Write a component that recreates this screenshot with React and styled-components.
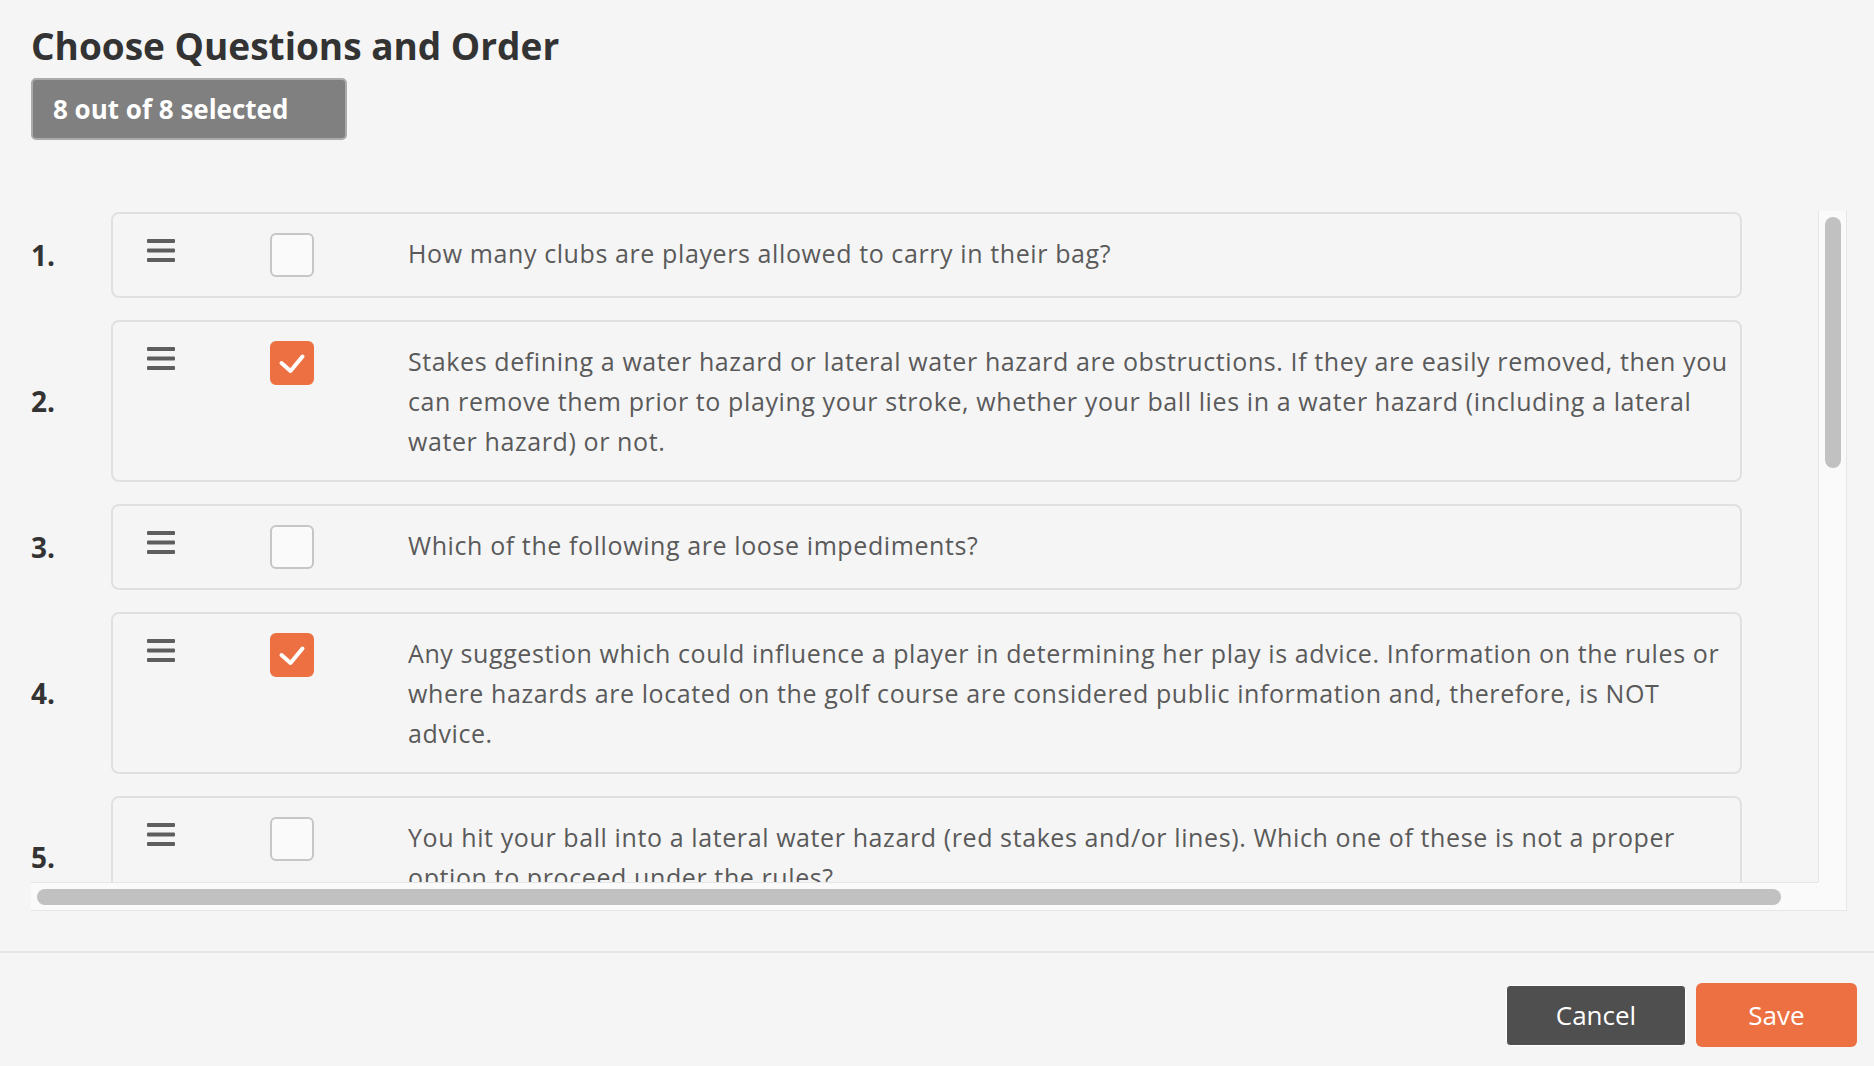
import React from 'react'
import styled, { createGlobalStyle } from 'styled-components'

const GlobalStyle = createGlobalStyle`
    html, body {
        margin: 0;
        padding: 0;
        background: #f5f5f5;
    }
    body {
        font-family: 'Open Sans', 'Liberation Sans', sans-serif;
    }
`

const questions = [
    { id: 1, checked: false, text: 'How many clubs are players allowed to carry in their bag?' },
    { id: 2, checked: true, text: 'Stakes defining a water hazard or lateral water hazard are obstructions. If they are easily removed, then you can remove them prior to playing your stroke, whether your ball lies in a water hazard (including a lateral water hazard) or not.' },
    { id: 3, checked: false, text: 'Which of the following are loose impediments?' },
    { id: 4, checked: true, text: 'Any suggestion which could influence a player in determining her play is advice. Information on the rules or where hazards are located on the golf course are considered public information and, therefore, is NOT advice.' },
    { id: 5, checked: false, text: 'You hit your ball into a lateral water hazard (red stakes and/or lines). Which one of these is not a proper option to proceed under the rules?' },
    { id: 6, checked: true, text: 'A player may ground his club in a bunker before making a stroke, as long as he does not improve his lie.' },
    { id: 7, checked: true, text: 'Your ball comes to rest on a cart path. Which of the following is true about taking relief from this immovable obstruction?' },
    { id: 8, checked: true, text: 'If a ball is lost outside a water hazard, the player must proceed under penalty of stroke and distance.' },
]

const Page = styled.div`
    height: 100vh;
    display: flex;
    flex-direction: column;
`
const Main = styled.div`
    flex: 1;
    display: flex;
    flex-direction: column;
    padding: 0 27px 0 31px;
`
const Title = styled.h1`
    margin: 24px 0 0;
    font-size: 37px;
    line-height: 44px;
    font-weight: 700;
    color: #333;
`
const Badge = styled.div`
    margin-top: 10px;
    width: 316px;
    height: 62px;
    box-sizing: border-box;
    display: flex;
    align-items: center;
    padding-left: 20px;
    border: 2px solid #ababab;
    border-radius: 5px;
    background: #808080;
    color: #fff;
    font-size: 26px;
    font-weight: 700;
`
const ScrollFrame = styled.div`
    margin-top: 71px;
    display: grid;
    grid-template-columns: 1787px 29px;
    grid-template-rows: 671px 29px;
`
const Viewport = styled.div`
    overflow: hidden;
`
const VTrack = styled.div`
    box-sizing: border-box;
    padding: 6px 0 0 6px;
    background: #fafafa;
    border-left: 1px solid #e6e6e6;
    border-right: 1px solid #e6e6e6;
`
const HTrack = styled.div`
    box-sizing: border-box;
    padding: 6px 0 0 6px;
    background: #fafafa;
    border-top: 1px solid #e6e6e6;
    border-bottom: 1px solid #e6e6e6;
`
const Corner = styled.div`
    background: #fafafa;
    border-right: 1px solid #e6e6e6;
    border-bottom: 1px solid #e6e6e6;
`
const Thumb = styled.div`
    width: ${p => p.$w}px;
    height: ${p => p.$h}px;
    border-radius: 8px;
    background: #c1c1c1;
`
const List = styled.div`
    width: 1818px;
    padding-top: 1px;
    display: flex;
    flex-direction: column;
    gap: 22px;
`
const Row = styled.div`
    display: flex;
    align-items: center;
`
const Number = styled.div`
    width: 80px;
    flex-shrink: 0;
    font-size: 28px;
    font-weight: 700;
    color: #333;
`
const Card = styled.div`
    width: 1631px;
    box-sizing: border-box;
    display: flex;
    align-items: flex-start;
    padding: 19px 12px 19px 34px;
    border: 2px solid #e0e0e0;
    border-radius: 8px;
    background: #f5f5f5;
`
const Handle = styled.div`
    width: 28px;
    height: 40px;
    margin: -2px 95px 0 0;
    display: flex;
    align-items: center;
    flex-shrink: 0;
`
const Checkbox = styled.div`
    width: 44px;
    height: 44px;
    box-sizing: border-box;
    flex-shrink: 0;
    margin-right: 94px;
    border-radius: 6px;
    border: 2px solid ${p => (p.$checked ? '#ed7042' : '#c6c6c6')};
    background: ${p => (p.$checked ? '#ed7042' : '#fafafa')};
    display: flex;
    align-items: center;
    justify-content: center;
`
const Text = styled.p`
    margin: 0;
    flex: 1;
    font-size: 25px;
    letter-spacing: 0.6px;
    line-height: 40px;
    color: #5a5a5a;
`
const Footer = styled.div`
    margin-top: 40px;
    border-top: 2px solid #e6e6e6;
    padding: 30px 17px 19px;
    display: flex;
    justify-content: flex-end;
    align-items: center;
    gap: 10px;
`
const Button = styled.button`
    font-family: inherit;
    font-size: 26px;
    color: #fff;
    cursor: pointer;
`
const CancelButton = styled(Button)`
    width: 180px;
    height: 61px;
    background: #4f4f4f;
    border: 1px solid #fff;
    border-radius: 4px;
`
const SaveButton = styled(Button)`
    width: 161px;
    height: 64px;
    background: #ed7042;
    border: none;
    border-radius: 6px;
`

function HandleIcon() {
    return (
        <svg width="28" height="24" viewBox="0 0 28 24">
            <rect x="0" y="0" width="28" height="4" rx="1" fill="#5e5e5e" />
            <rect x="0" y="9.5" width="28" height="4" rx="1" fill="#5e5e5e" />
            <rect x="0" y="19" width="28" height="4" rx="1" fill="#5e5e5e" />
        </svg>
    )
}

function CheckIcon() {
    return (
        <svg width="44" height="44" viewBox="0 0 44 44" style={{ margin: -2 }}>
            <polyline points="11.5,22 20.5,30 32.5,15.5" fill="none" stroke="#fff" strokeWidth="4" strokeLinecap="round" strokeLinejoin="round" />
        </svg>
    )
}

export default function App() {
    return (
        <Page>
            <GlobalStyle />
            <Main>
                <Title>Choose Questions and Order</Title>
                <Badge>8 out of 8 selected</Badge>
                <ScrollFrame>
                    <Viewport>
                        <List>
                            {questions.map((q, i) => (
                                <Row key={q.id}>
                                    <Number>{i + 1}.</Number>
                                    <Card>
                                        <Handle><HandleIcon /></Handle>
                                        <Checkbox $checked={q.checked}>{q.checked && <CheckIcon />}</Checkbox>
                                        <Text>{q.text}</Text>
                                    </Card>
                                </Row>
                            ))}
                        </List>
                    </Viewport>
                    <VTrack><Thumb $w={16} $h={251} /></VTrack>
                    <HTrack><Thumb $w={1744} $h={16} /></HTrack>
                    <Corner />
                </ScrollFrame>
            </Main>
            <Footer>
                <CancelButton>Cancel</CancelButton>
                <SaveButton>Save</SaveButton>
            </Footer>
        </Page>
    )
}
